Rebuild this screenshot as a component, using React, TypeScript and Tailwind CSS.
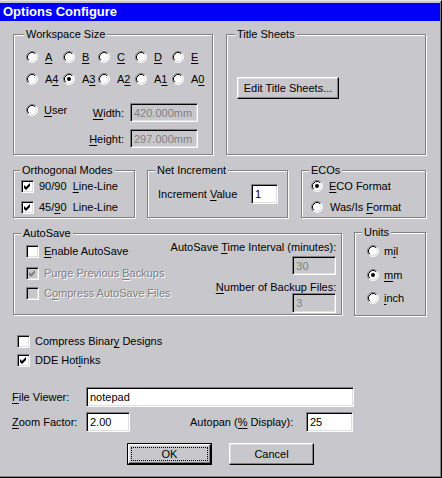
import React from 'react';

// Win9x style "Options Configure" dialog

const U = ({ children }: { children: React.ReactNode }) => (
  <span className="underline decoration-1 underline-offset-[2px]">{children}</span>
);

function Group({ label, className, labelLeft, children }: { label: string; className: string; labelLeft: string; children?: React.ReactNode }) {
  return (
    <div className={`relative border border-[#808080] shadow-[inset_1px_1px_0_#fff,1px_1px_0_#fff] ${className}`}>
      <span className={`absolute -top-[8px] ${labelLeft} bg-[#c8c8cc] px-[2px] leading-[14px] whitespace-nowrap`}>{label}</span>
      {children}
    </div>
  );
}

function RadioDot({ checked }: { checked?: boolean }) {
  return (
    <svg width="12" height="12" viewBox="0 0 12 12" className="shrink-0">
      <circle cx="6" cy="6" r="5" fill="#fff" />
      <path d="M2.11 9.89A5.5 5.5 0 0 1 9.89 2.11" stroke="#808080" fill="none" />
      <path d="M2.82 9.18A4.5 4.5 0 0 1 9.18 2.82" stroke="#000" fill="none" />
      <path d="M9.89 2.11A5.5 5.5 0 0 1 2.11 9.89" stroke="#fff" fill="none" />
      <path d="M9.18 2.82A4.5 4.5 0 0 1 2.82 9.18" stroke="#dfdfdf" fill="none" />
      {checked && <circle cx="6" cy="6" r="2" fill="#000" />}
    </svg>
  );
}

function Radio({ checked, gap = 'gap-[7px]', children }: { checked?: boolean; gap?: string; children: React.ReactNode }) {
  return (
    <div className={`h-[16px] flex items-center ${gap} whitespace-nowrap`}>
      <RadioDot checked={checked} />
      <span>{children}</span>
    </div>
  );
}

function Check({ checked, disabled, children }: { checked?: boolean; disabled?: boolean; children: React.ReactNode }) {
  return (
    <div className="h-[16px] flex items-center gap-[5px] whitespace-nowrap">
      <div
        className={`w-[13px] h-[13px] shrink-0 flex items-center justify-center border border-t-[#808080] border-l-[#808080] border-r-white border-b-white shadow-[inset_1px_1px_0_#000,inset_-1px_-1px_0_#dfdfdf] ${
          disabled ? 'bg-[#c8c8cc]' : 'bg-white'
        }`}
      >
        {checked && (
          <svg width="9" height="9" viewBox="0 0 9 9">
            <polygon points="1,3 3,5 7,1 7,4 3,8 1,6" fill={disabled ? '#808080' : '#000'} />
          </svg>
        )}
      </div>
      <span className={disabled ? 'text-[#808080] [text-shadow:1px_1px_0_#fff]' : ''}>{children}</span>
    </div>
  );
}

function Field({ value, disabled, className }: { value: string; disabled?: boolean; className: string }) {
  return (
    <div
      className={`flex items-center pl-[3px] border border-t-[#808080] border-l-[#808080] border-r-white border-b-white shadow-[inset_1px_1px_0_#000,inset_-1px_-1px_0_#dfdfdf] whitespace-nowrap overflow-hidden ${
        disabled ? 'bg-[#c8c8cc] text-[#808080]' : 'bg-white text-black'
      } ${className}`}
    >
      {value}
    </div>
  );
}

function Button({ children, className, isDefault }: { children: React.ReactNode; className: string; isDefault?: boolean }) {
  const raised =
    'border border-t-white border-l-white border-r-black border-b-black shadow-[inset_-1px_-1px_0_#808080,inset_1px_1px_0_#dfdfdf] bg-[#c8c8cc]';
  if (isDefault) {
    return (
      <div className={`border border-black flex ${className}`}>
        <div className={`flex-1 p-[2px] flex ${raised}`}>
          <div className="flex-1 flex items-center justify-center border border-dotted border-black">{children}</div>
        </div>
      </div>
    );
  }
  return <div className={`flex items-center justify-center ${raised} ${className}`}>{children}</div>;
}

export default function App() {
  return (
    <div className="w-[442px] h-[478px] bg-[#c8c8cc] font-['Liberation_Sans',Arial,sans-serif] text-[11px] leading-[14px] text-black flex flex-col pt-[2px] border-t border-t-[#e4e4e4] border-r border-b border-r-black border-b-black shadow-[inset_-1px_-1px_0_#808080]">
      <div className="h-[18px] mr-[1px] bg-[#0000fa] text-white font-bold text-[13px] pl-[3px] flex items-center">
        Options Configure
      </div>

      <div className="flex flex-col px-[13px]">
        {/* row 1 */}
        <div className="mt-[13px] flex gap-[13px]">
          <Group label="Workspace Size" labelLeft="left-[10px]" className="w-[200px] h-[121px]">
            <div className="pt-[14px] pl-[12px]">
              <div className="grid grid-cols-[37px_35px_37px_37px_37px] gap-y-[6px]">
                <Radio><U>A</U></Radio>
                <Radio><U>B</U></Radio>
                <Radio><U>C</U></Radio>
                <Radio><U>D</U></Radio>
                <Radio><U>E</U></Radio>
                <Radio>A<U>4</U></Radio>
                <Radio checked>A<U>3</U></Radio>
                <Radio>A<U>2</U></Radio>
                <Radio>A<U>1</U></Radio>
                <Radio>A<U>0</U></Radio>
              </div>
              <div className="mt-[16px] grid grid-cols-[58px_34px_68px] gap-x-[6px] gap-y-[7px] grid-rows-[19px_19px]">
                <div className="self-start -mt-px">
                  <Radio gap="gap-[6px]"><U>U</U>ser</Radio>
                </div>
                <div className="flex items-center justify-end whitespace-nowrap"><U>W</U>idth:</div>
                <Field value="420.000mm" disabled className="h-[19px]" />
                <div />
                <div className="flex items-center justify-end whitespace-nowrap"><U>H</U>eight:</div>
                <Field value="297.000mm" disabled className="h-[19px]" />
              </div>
            </div>
          </Group>
          <Group label="Title Sheets" labelLeft="left-[8px]" className="w-[200px] h-[121px]">
            <div className="pt-[42px] pl-[10px]">
              <Button className="w-[102px] h-[22px]">Edit Title Sheets...</Button>
            </div>
          </Group>
        </div>

        {/* row 2 */}
        <div className="mt-[15px] flex">
          <Group label="Orthogonal Modes" labelLeft="left-[6px]" className="w-[122px] h-[48px]">
            <div className="pt-[7px] pl-[7px] flex flex-col gap-[5px]">
              <Check checked>{'90/90\u00a0 '}<U>L</U>ine-Line</Check>
              <Check checked>{'45/'}<U>9</U>{'0\u00a0 Line-Line'}</Check>
            </div>
          </Group>
          <Group label="Net Increment" labelLeft="left-[7px]" className="ml-[12px] w-[141px] h-[48px]">
            <div className="pt-[13px] pl-[10px] flex items-center">
              <span className="w-[93px] whitespace-nowrap">Increment <U>V</U>alue</span>
              <Field value="1" className="w-[27px] h-[20px]" />
            </div>
          </Group>
          <Group label="ECOs" labelLeft="left-[7px]" className="ml-[13px] w-[125px] h-[48px]">
            <div className="pt-[7px] pl-[9px] flex flex-col gap-[5px]">
              <Radio checked gap="gap-[6px]"><U>E</U>CO Format</Radio>
              <Radio gap="gap-[7px]">Was/Is <U>F</U>ormat</Radio>
            </div>
          </Group>
        </div>

        {/* row 3 */}
        <div className="mt-[14px] flex items-start">
          <Group label="AutoSave" labelLeft="left-[7px]" className="mt-px w-[329px] h-[82px]">
            <div className="flex justify-between">
              <div className="pt-[9px] pl-[12px] flex flex-col">
                <Check><U>E</U>nable AutoSave</Check>
                <div className="mt-[6px]">
                  <Check checked disabled>Purge Previous <U>B</U>ackups</Check>
                </div>
                <div className="mt-[4px]">
                  <Check disabled>C<U>o</U>mpress AutoSave Files</Check>
                </div>
              </div>
              <div className="pt-[6px] pr-[9px] flex flex-col items-end">
                <span className="whitespace-nowrap">AutoSave <U>T</U>ime Interval (minutes):</span>
                <Field value="30" disabled className="mt-[2px] w-[44px] h-[19px]" />
                <span className="mt-[5px] whitespace-nowrap"><U>N</U>umber of Backup Files:</span>
                <Field value="3" disabled className="-mt-px w-[44px] h-[20px]" />
              </div>
            </div>
          </Group>
          <Group label="Units" labelLeft="left-[7px]" className="ml-[12px] w-[72px] h-[84px]">
            <div className="pt-[10px] pl-[12px] flex flex-col">
              <Radio gap="gap-[5px]">m<U>i</U>l</Radio>
              <div className="mt-[8px]">
                <Radio checked gap="gap-[5px]"><U>m</U>m</Radio>
              </div>
              <div className="mt-[7px]">
                <Radio gap="gap-[5px]"><U>i</U>nch</Radio>
              </div>
            </div>
          </Group>
        </div>

        {/* global options */}
        <div className="mt-[17px] ml-[4px] flex flex-col gap-[3px]">
          <Check>Compress Binar<U>y</U> Designs</Check>
          <Check checked>DDE Hot<U>l</U>inks</Check>
        </div>

        <div className="mt-[19px] -ml-px h-[20px] flex items-center">
          <span className="w-[74px]"><U>F</U>ile Viewer:</span>
          <Field value="notepad" className="w-[268px] h-[20px]" />
        </div>
        <div className="mt-[5px] -ml-px h-[20px] flex items-center">
          <span className="w-[74px]"><U>Z</U>oom Factor:</span>
          <Field value="2.00" className="w-[44px] h-[20px]" />
          <span className="ml-[60px] w-[116px] whitespace-nowrap">Autopan (<U>%</U> Display):</span>
          <Field value="25" className="w-[47px] h-[20px]" />
        </div>

        <div className="mt-[11px] ml-[114px] flex gap-[17px]">
          <Button isDefault className="w-[85px] h-[22px]">OK</Button>
          <Button className="w-[85px] h-[22px]">Cancel</Button>
        </div>
      </div>
    </div>
  );
}
